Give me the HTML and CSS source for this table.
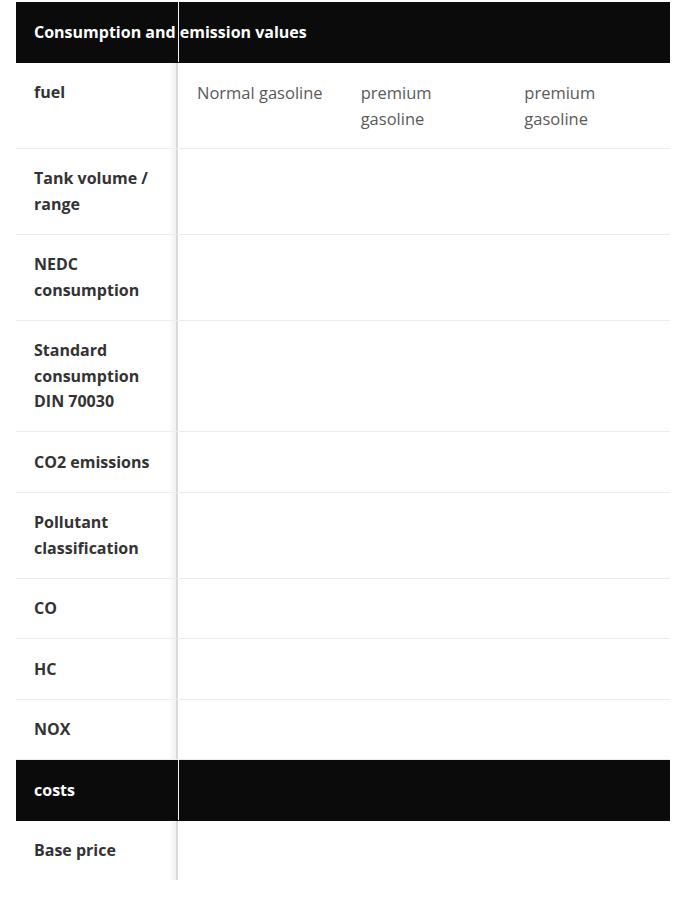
FILE: index.html
```html
<!DOCTYPE html>
<html>
<head>
<meta charset="utf-8">
<link rel="stylesheet" href="styles.css">
</head>
<body>
<div class="wrap">
<table class="spec">
  <colgroup><col class="c1"><col><col><col></colgroup>
  <tr class="section"><th class="label"><span class="over">Consumption and emission values</span></th><td></td><td></td><td></td></tr>
  <tr><th class="label">fuel</th><td>Normal gasoline</td><td>premium gasoline</td><td>premium gasoline</td></tr>
  <tr><th class="label">Tank volume / range</th><td></td><td></td><td></td></tr>
  <tr><th class="label">NEDC consumption</th><td></td><td></td><td></td></tr>
  <tr><th class="label">Standard consumption DIN 70030</th><td></td><td></td><td></td></tr>
  <tr><th class="label">CO2 emissions</th><td></td><td></td><td></td></tr>
  <tr><th class="label">Pollutant classification</th><td></td><td></td><td></td></tr>
  <tr><th class="label">CO</th><td></td><td></td><td></td></tr>
  <tr><th class="label">HC</th><td></td><td></td><td></td></tr>
  <tr><th class="label">NOX</th><td></td><td></td><td></td></tr>
  <tr class="section"><th class="label">costs</th><td></td><td></td><td></td></tr>
  <tr class="last"><th class="label">Base price</th><td></td><td></td><td></td></tr>
</table>
</div>
</body>
</html>
```
FILE: styles.css
```css
html, body { margin: 0; padding: 0; background: #fff; }
body { font-family: "Open Sans", "Liberation Sans", sans-serif; }
.wrap { padding: 2px 15px 0 16px; }
.spec {
  width: 654px;
  border-collapse: separate;
  border-spacing: 0;
  table-layout: fixed;
  font-size: 16px;
  line-height: 25.5px;
}
.spec col.c1 { width: 163px; }
.spec th, .spec td {
  padding: 17.5px 18px 16.5px 18px;
  text-align: left;
  vertical-align: top;
  border-bottom: 1px solid #ececec;
}
.spec td { color: #5a5a5a; font-weight: 400; font-size: 16.5px; }
.spec th.label {
  color: #333;
  font-weight: 700;
  background-image: linear-gradient(to right,
    rgba(0,0,0,0) calc(100% - 10px),
    #f1f1f1 calc(100% - 3px),
    #d9d9d9 calc(100% - 3px),
    #d9d9d9 calc(100% - 1px),
    #ffffff calc(100% - 1px));
}
.spec tr.section th, .spec tr.section td {
  background: #0b0b0b;
  color: #fff;
  border-bottom: 1px solid #0b0b0b;
}
.spec tr.section th.label {
  background: #0b0b0b;
  box-shadow: inset -1px 0 0 #f4f4f4;
  white-space: nowrap;
  overflow: visible;
}
.over { position: relative; z-index: 2; }
.spec tr.last th, .spec tr.last td { border-bottom: none; }
```
